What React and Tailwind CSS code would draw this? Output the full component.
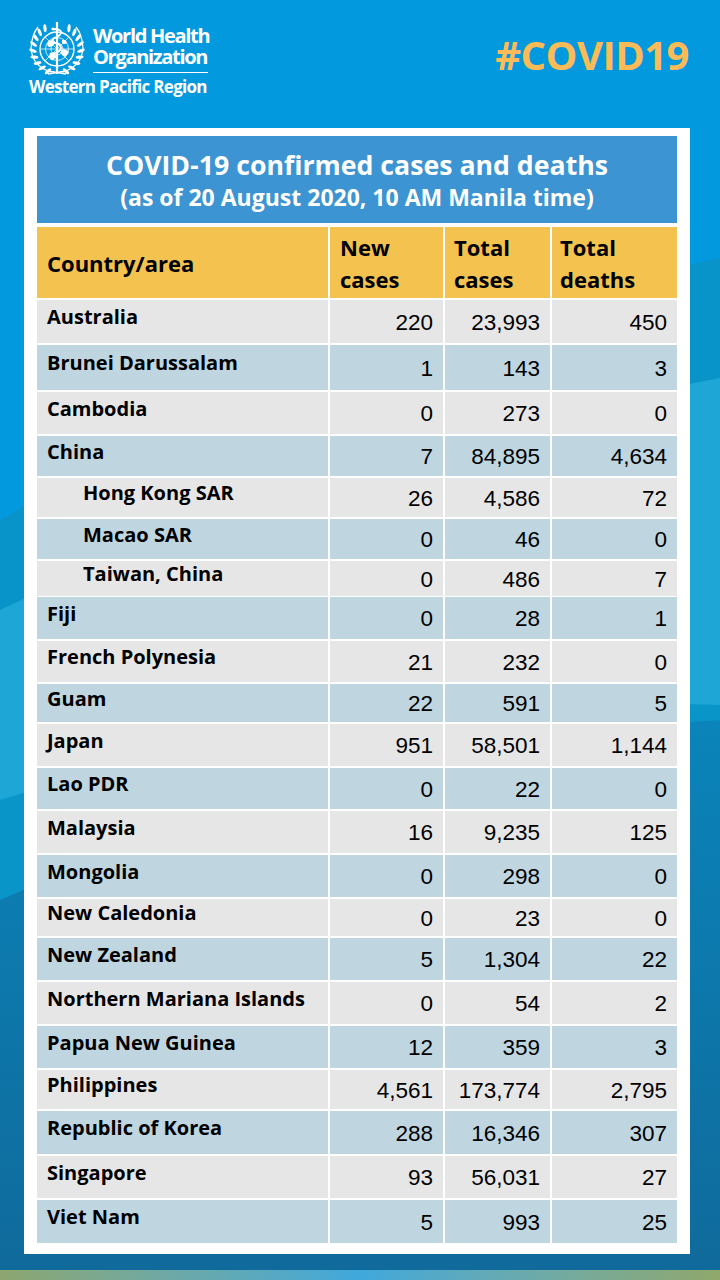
import React from "react";

const rows = [
  { name: "Australia", n: "220", t: "23,993", d: "450", h: "h-[43px]" },
  { name: "Brunei Darussalam", n: "1", t: "143", d: "3", h: "h-[45px]" },
  { name: "Cambodia", n: "0", t: "273", d: "0", h: "h-[42px]" },
  { name: "China", n: "7", t: "84,895", d: "4,634", h: "h-[40px]" },
  { name: "Hong Kong SAR", n: "26", t: "4,586", d: "72", h: "h-[39px]", sub: true },
  { name: "Macao SAR", n: "0", t: "46", d: "0", h: "h-[40px]", sub: true },
  { name: "Taiwan, China", n: "0", t: "486", d: "7", h: "h-[34px]", sub: true },
  { name: "Fiji", n: "0", t: "28", d: "1", h: "h-[42px]" },
  { name: "French Polynesia", n: "21", t: "232", d: "0", h: "h-[41px]" },
  { name: "Guam", n: "22", t: "591", d: "5", h: "h-[38px]" },
  { name: "Japan", n: "951", t: "58,501", d: "1,144", h: "h-[42px]" },
  { name: "Lao PDR", n: "0", t: "22", d: "0", h: "h-[41px]" },
  { name: "Malaysia", n: "16", t: "9,235", d: "125", h: "h-[42px]" },
  { name: "Mongolia", n: "0", t: "298", d: "0", h: "h-[42px]" },
  { name: "New Caledonia", n: "0", t: "23", d: "0", h: "h-[37px]" },
  { name: "New Zealand", n: "5", t: "1,304", d: "22", h: "h-[42px]" },
  { name: "Northern Mariana Islands", n: "0", t: "54", d: "2", h: "h-[42px]" },
  { name: "Papua New Guinea", n: "12", t: "359", d: "3", h: "h-[42px]" },
  { name: "Philippines", n: "4,561", t: "173,774", d: "2,795", h: "h-[39px]" },
  { name: "Republic of Korea", n: "288", t: "16,346", d: "307", h: "h-[43px]" },
  { name: "Singapore", n: "93", t: "56,031", d: "27", h: "h-[42px]" },
  { name: "Viet Nam", n: "5", t: "993", d: "25", h: "h-[43px]" },
];

// wavy backdrop bands
function Backdrop() {
  return (
    <svg className="absolute inset-0 w-full h-full" viewBox="0 0 720 1280" preserveAspectRatio="none">
      <defs>
        <linearGradient id="deep" x1="0" y1="0" x2="0" y2="1">
          <stop offset="0" stopColor="#0a84ba" />
          <stop offset="1" stopColor="#106a9b" />
        </linearGradient>
      </defs>
      <rect width="720" height="1280" fill="#0399de" />
      <path d="M0,520 Q330,340 720,258 L720,1280 L0,1280 Z" fill="#0894c9" />
      <path d="M0,610 Q330,450 720,378 L720,1280 L0,1280 Z" fill="#1ea6d6" />
      <path d="M0,800 Q360,690 720,705 L720,1280 L0,1280 Z" fill="#0a95c8" />
      <path d="M0,900 Q360,740 720,720 L720,1280 L0,1280 Z" fill="url(#deep)" />
    </svg>
  );
}

function Emblem() {
  const leaves = [];
  for (let i = 0; i < 9; i++) {
    const a = ((112 + i * 16) * Math.PI) / 180;
    const r = 24;
    const x = 33 + r * Math.cos(a);
    const y = 29 + r * Math.sin(a);
    const rot = (a * 180) / Math.PI + 90 + 25;
    leaves.push({ x, y, rot });
  }
  return (
    <svg width="66" height="56" viewBox="0 0 66 56" fill="none" stroke="white">
      {/* laurel */}
      <path d="M27,52 Q8,46 7,28 Q8,14 14,7" strokeWidth="1.2" />
      <path d="M39,52 Q58,46 59,28 Q58,14 52,7" strokeWidth="1.2" />
      <path d="M24,51 L42,54 M42,51 L24,54" strokeWidth="1.3" />
      {leaves.map((l, i) => (
        <g key={i}>
          <ellipse cx={l.x} cy={l.y} rx="1.6" ry="4" fill="white" stroke="none" transform={`rotate(${l.rot} ${l.x} ${l.y})`} />
          <ellipse cx={66 - l.x} cy={l.y} rx="1.6" ry="4" fill="white" stroke="none" transform={`rotate(${-l.rot} ${66 - l.x} ${l.y})`} />
        </g>
      ))}
      {/* globe */}
      <circle cx="33" cy="29" r="17" strokeWidth="1.4" />
      <circle cx="33" cy="29" r="11.5" strokeWidth="0.8" />
      <circle cx="33" cy="29" r="6" strokeWidth="0.8" />
      <path d="M16,29 H50 M33,12 V46 M21,17 L45,41 M45,17 L21,41" strokeWidth="0.7" />
      <path d="M24,22 Q28,18 31,22 Q29,27 25,27 Q22,25 24,22 Z M26,33 Q31,31 32,36 Q30,41 27,40 Q24,37 26,33 Z M37,30 Q42,28 45,32 Q43,37 39,36 Q36,33 37,30 Z M38,20 Q42,19 43,23 Q40,25 38,23 Z" fill="white" stroke="none" />
      {/* staff + snake */}
      <path d="M33,2 V54" strokeWidth="2.2" />
      <path d="M29,9 Q38,9 37,13 Q35,17 30,18 Q27,21 31,23 Q37,24 37,28 Q36,32 31,33 Q28,35 32,38" strokeWidth="1.8" />
      <circle cx="29" cy="9" r="1.6" fill="white" stroke="none" />
    </svg>
  );
}

export default function App() {
  return (
    <div className="relative w-[720px] h-[1280px] overflow-hidden bg-[#0399de] font-['Open_Sans',sans-serif]">
      <Backdrop />
      <div className="relative flex flex-col h-full">
        {/* top bar */}
        <div className="flex justify-between items-start h-[128px] pl-[24px] pr-[31px] pt-[20px]">
          <div className="flex flex-col">
            <div className="flex items-start">
              <Emblem />
              <div className="ml-[3px] flex flex-col text-white font-bold">
                <span className="text-[20px] leading-[21px] tracking-[-1.3px] pt-[5px] whitespace-nowrap">World Health</span>
                <span className="text-[20px] leading-[21px] tracking-[-1.3px] whitespace-nowrap">Organization</span>
                <div className="mt-[5px] h-px w-[115px] bg-white" />
              </div>
            </div>
            <span className="ml-[5px] mt-[1px] text-white font-bold text-[17px] leading-[20px] tracking-[-0.7px] whitespace-nowrap">
              Western Pacific Region
            </span>
          </div>
          <span className="pt-[10px] text-[#fcbb56] font-bold text-[40px] leading-[50px] tracking-[-0.5px]">
            #COVID19
          </span>
        </div>

        {/* card */}
        <div className="ml-[24px] w-[666px] bg-white pt-[8px] px-[13px] pb-[11px]">
          <div className="h-[87px] bg-[#3c94d2] flex flex-col items-center justify-center text-white font-bold">
            <span className="text-[26.7px] leading-[35px]">COVID-19 confirmed cases and deaths</span>
            <span className="text-[23px] leading-[30px]">(as of 20 August 2020, 10 AM Manila time)</span>
          </div>

          <div className="mt-[4px] grid grid-cols-[291px_113px_105px_125px] gap-x-[2px] h-[71px] text-black font-bold text-[22px] leading-[32px]">
            <div className="bg-[#f4c24f] flex items-center pl-[10px]">Country/area</div>
            <div className="bg-[#f4c24f] flex flex-col justify-center pl-[10px]">
              <span>New</span>
              <span>cases</span>
            </div>
            <div className="bg-[#f4c24f] flex flex-col justify-center pl-[9px]">
              <span>Total</span>
              <span>cases</span>
            </div>
            <div className="bg-[#f4c24f] flex flex-col justify-center pl-[8px]">
              <span>Total</span>
              <span>deaths</span>
            </div>
          </div>

          {rows.map((r, i) => {
            const bg = i % 2 === 0 ? "bg-[#e6e6e6]" : "bg-[#bfd5e0]";
            return (
              <div key={r.name} className={`mt-[2px] grid grid-cols-[291px_113px_105px_125px] gap-x-[2px] ${r.h}`}>
                <div className={`${bg} flex items-center pb-[9px] ${r.sub ? "pl-[46px]" : "pl-[10px]"} font-bold text-[20px] leading-[26px] text-black`}>
                  {r.name}
                </div>
                {[r.n, r.t, r.d].map((v, j) => (
                  <div key={j} className={`${bg} flex items-center justify-end pt-[2px] pr-[10px] font-['Liberation_Sans',Arial,sans-serif] text-[22.5px] leading-[26px] text-black`}>
                    {v}
                  </div>
                ))}
              </div>
            );
          })}
        </div>

        <div className="mt-auto h-[10px] bg-linear-to-r from-[#8ca66d] via-[#3fa8dc] to-[#90a86a]" />
      </div>
    </div>
  );
}
